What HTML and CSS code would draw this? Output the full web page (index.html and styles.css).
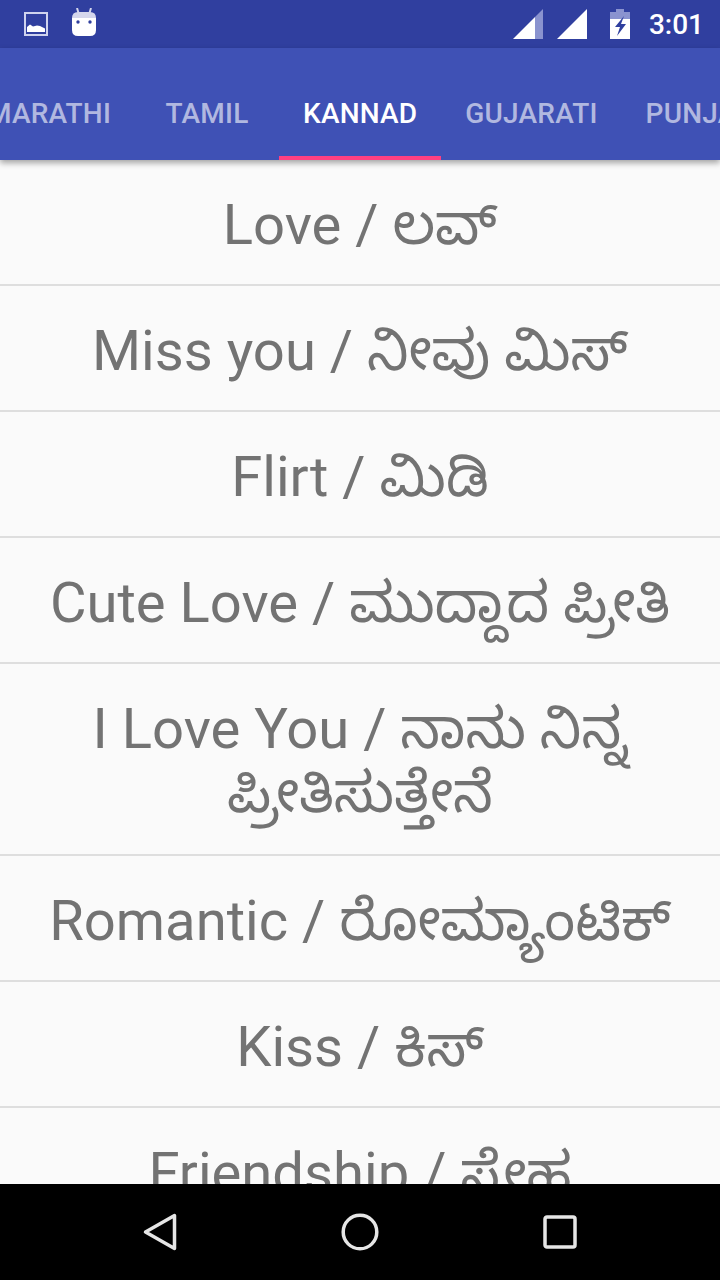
FILE: index.html
```html
<!DOCTYPE html>
<html lang="kn">
<head>
    <meta charset="UTF-8">
    <meta name="viewport" content="width=device-width, initial-scale=1.0">
    <title>Kannad</title>
    <link rel="stylesheet" href="styles.css">
</head>
<body>
    <div class="screen">
        <!-- Status bar -->
        <div class="status-bar">
            <svg class="status-icon picture-icon" width="24" height="24" viewBox="0 0 24 24">
                <rect x="1" y="1" width="22" height="22" fill="none" stroke="#cfd3ee" stroke-width="2"/>
                <path d="M3 20v-5l3-2.500 3 2 4-1 3 .5 3 1.500 2 1v3.500z" fill="#fff"/>
            </svg>
            <svg class="status-icon android-icon" width="24" height="28" viewBox="0 0 24 28">
                <path d="M5 0l1.500 5M19 0l-1.500 5" stroke="#d5d7ec" stroke-width="2" fill="none"/>
                <path d="M0 10q0-6 6-6h12q6 0 6 6v1H0z" fill="#d5d7ec"/>
                <path d="M0 10h24v12q0 6-6 6H6q-6 0-6-6z" fill="#fff"/>
                <circle cx="6" cy="14" r="1.700" fill="#2f3f9e"/>
                <circle cx="18" cy="14" r="1.700" fill="#2f3f9e"/>
            </svg>
            <div class="status-right">
                <svg class="signal-one" width="30" height="30" viewBox="0 0 30 30">
                    <path d="M0 30L22 8v22z" fill="#fff"/>
                    <path d="M22 8l8-8v30h-8z" fill="#8a93cf"/>
                </svg>
                <svg class="signal-two" width="30" height="30" viewBox="0 0 30 30">
                    <path d="M0 30L30 0v30z" fill="#fff"/>
                </svg>
                <svg class="battery" width="20" height="30" viewBox="0 0 20 30">
                    <path d="M6 0h8v3h6v7H0V3h6z" fill="#8a93cf"/>
                    <path d="M0 10h20v20H0z" fill="#fff"/>
                    <path d="M14 7L5 18h5l-3 9 9-12h-5z" fill="#2f3f9e"/>
                </svg>
                <span class="clock">3:01</span>
            </div>
        </div>

        <!-- Tabs -->
        <div class="tabs">
            <div class="tab-strip">
                <div class="tab">MARATHI</div>
                <div class="tab">TAMIL</div>
                <div class="tab active">KANNAD</div>
                <div class="tab">GUJARATI</div>
                <div class="tab">PUNJABI</div>
            </div>
        </div>

        <!-- List -->
        <div class="list">
            <div class="list-item">Love / ಲವ್</div>
            <div class="list-item">Miss you / ನೀವು ಮಿಸ್</div>
            <div class="list-item">Flirt / ಮಿಡಿ</div>
            <div class="list-item">Cute Love / ಮುದ್ದಾದ ಪ್ರೀತಿ</div>
            <div class="list-item two-line">I Love You / ನಾನು ನಿನ್ನ ಪ್ರೀತಿಸುತ್ತೇನೆ</div>
            <div class="list-item">Romantic / ರೋಮ್ಯಾಂಟಿಕ್</div>
            <div class="list-item">Kiss / ಕಿಸ್</div>
            <div class="list-item">Friendship / ಸ್ನೇಹ</div>
        </div>

        <!-- Navigation bar -->
        <div class="nav-bar">
            <div class="nav-button">
                <svg width="34" height="38" viewBox="0 0 34 38">
                    <path d="M31.500 2.500v33L2.500 19z" fill="none" stroke="#e6e6e6" stroke-width="3.500" stroke-linejoin="round"/>
                </svg>
            </div>
            <div class="nav-button">
                <svg width="38" height="38" viewBox="0 0 38 38">
                    <circle cx="19" cy="19" r="16.800" fill="none" stroke="#e6e6e6" stroke-width="3.500"/>
                </svg>
            </div>
            <div class="nav-button">
                <svg width="34" height="34" viewBox="0 0 34 34">
                    <rect x="2" y="2" width="30" height="30" rx="2" fill="none" stroke="#e6e6e6" stroke-width="3.500"/>
                </svg>
            </div>
        </div>
    </div>
</body>
</html>
```

FILE: styles.css
```css
body {
    margin: 0;
    background: #fafafa;
    font-family: 'Roboto', 'Noto Sans Kannada', 'Noto Sans', sans-serif;
}

.screen {
    width: 720px;
    height: 1280px;
    display: flex;
    flex-direction: column;
    overflow: hidden;
}

.status-bar {
    height: 48px;
    flex: none;
    display: flex;
    align-items: center;
    padding: 0 16px 0 24px;
    background: #303f9f;
    color: #fff;
}

.android-icon {
    margin-left: 24px;
    margin-bottom: 5px;
}

.status-right {
    margin-left: auto;
    display: flex;
    align-items: center;
}

.signal-two {
    margin-left: 14px;
}

.battery {
    margin-left: 23px;
}

.clock {
    margin-left: 19px;
    font-size: 28px;
    font-weight: 500;
}

.tabs {
    height: 112px;
    flex: none;
    overflow: hidden;
    position: relative;
    z-index: 1;
    background: #3f51b5;
    box-shadow: 0 3px 6px rgba(0, 0, 0, 0.35);
}

.tab-strip {
    display: flex;
    height: 112px;
    margin-left: -37px;
}

.tab {
    flex: none;
    box-sizing: border-box;
    min-width: 144px;
    height: 112px;
    padding: 18px 24px 0;
    display: flex;
    align-items: center;
    justify-content: center;
    font-size: 28px;
    font-weight: 500;
    letter-spacing: 0.2px;
    color: rgba(255, 255, 255, 0.6);
}

.tab.active {
    color: #fff;
    box-shadow: inset 0 -4px 0 #ff4081;
}

.list {
    flex: 1;
    overflow: hidden;
    background: #fafafa;
}

.list-item {
    padding: 33px 32px 27px;
    border-bottom: 2px solid #dedede;
    font-size: 56.2px;
    line-height: 64px;
    text-align: center;
    color: #737373;
}

.list-item.two-line {
    padding-bottom: 29px;
}

.nav-bar {
    height: 96px;
    flex: none;
    display: flex;
    align-items: center;
    justify-content: center;
    background: #000;
}

.nav-button {
    width: 200px;
    display: flex;
    justify-content: center;
}
```
